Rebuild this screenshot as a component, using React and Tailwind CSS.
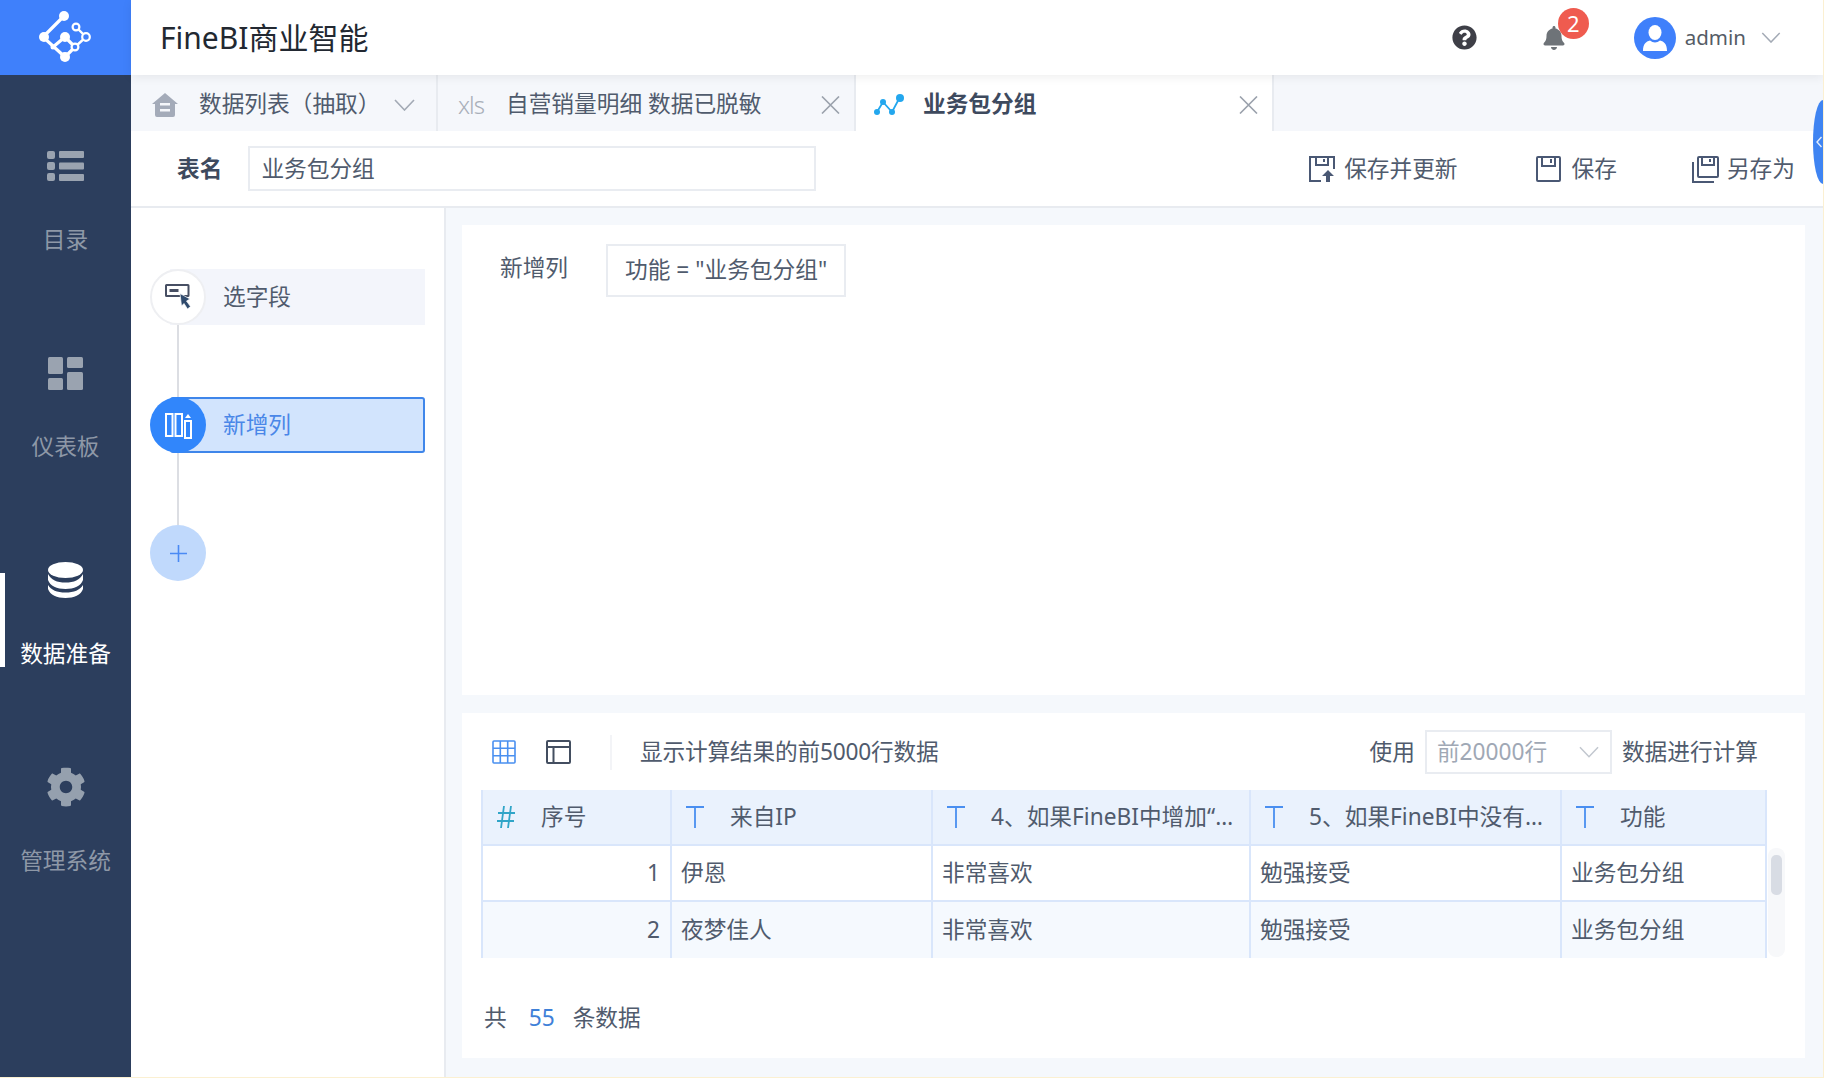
import React from "react";
import { FaCog, FaQuestionCircle, FaBell } from "react-icons/fa";

const Logo = () => (
  <svg width="131" height="75" viewBox="0 0 131 75" fill="none">
    <g stroke="#fff" strokeWidth="3.2" strokeLinecap="round">
      <path d="M64 16 L43 37 L65 57 M53 47 L65 37 L75 47 L65 57" />
      <path d="M76 27 L86 37 L75 47" strokeWidth="2.4" />
    </g>
    <g fill="#fff">
      <circle cx="64" cy="16" r="5" />
      <circle cx="44" cy="37" r="5" />
      <circle cx="65" cy="37" r="5" />
      <circle cx="65" cy="57" r="5" />
      <circle cx="53" cy="47" r="2.5" />
    </g>
    <g fill="#3f80fb" stroke="#fff" strokeWidth="2.2">
      <circle cx="76" cy="27" r="3.4" />
      <circle cx="86" cy="37" r="3.8" />
      <circle cx="75" cy="47" r="3.4" />
    </g>
  </svg>
);

const ListIcon = () => (
  <svg width="38" height="32" viewBox="0 0 38 32" fill="#9aa3b0">
    <rect x="0" y="1" width="8" height="8" rx="2" />
    <rect x="0" y="12" width="8" height="8" rx="2" />
    <rect x="0" y="23" width="8" height="8" rx="2" />
    <rect x="12" y="1" width="25" height="7" rx="1" />
    <rect x="12" y="12.5" width="25" height="7" rx="1" />
    <rect x="12" y="24" width="25" height="7" rx="1" />
  </svg>
);

const DashIcon = () => (
  <svg width="35" height="33" viewBox="0 0 35 33" fill="#9aa3b0">
    <rect x="0" y="0" width="15" height="17" rx="1.5" />
    <rect x="0" y="21" width="15" height="12" rx="1.5" />
    <rect x="19" y="0" width="16" height="11" rx="1.5" />
    <rect x="19" y="15" width="16" height="18" rx="1.5" />
  </svg>
);

const DbIcon = () => (
  <svg width="35" height="36" viewBox="0 0 35 36" fill="#fff">
    <ellipse cx="17.5" cy="8" rx="17.5" ry="8" />
    <path d="M0 12 C3 18 9 20.5 17.5 20.5 C26 20.5 32 18 35 12 V18 C33 24 26 27 17.5 27 C9 27 2 24 0 18 Z" />
    <path d="M0 23 C3 28 9 30.5 17.5 30.5 C26 30.5 32 28 35 23 V27 C33 33 26 36 17.5 36 C9 36 2 33 0 27 Z" />
  </svg>
);

const NavItem = ({ icon, label, active }) => (
  <div className="h-[207px] flex flex-col items-center shrink-0">
    <div className="h-[40px] flex items-center justify-center">{icon}</div>
    <div className={`mt-[38px] leading-[32px] ${active ? "text-white" : "text-[#8e98a7]"}`}>{label}</div>
  </div>
);

const Chevron = ({ w = 21, h = 12, color = "#a3aab5" }) => (
  <svg width={w} height={h} viewBox="0 0 21 12" fill="none" stroke={color} strokeWidth="1.6">
    <path d="M1 1 L10.5 11 L20 1" />
  </svg>
);

const CloseX = () => (
  <svg width="19" height="18" viewBox="0 0 19 18" fill="none" stroke="#9aa1ac" strokeWidth="1.6">
    <path d="M1 0.5 L18 17.5 M18 0.5 L1 17.5" />
  </svg>
);

const HomeIcon = () => (
  <svg width="26" height="24" viewBox="0 0 26 24" fill="#a4abb9">
    <path d="M13 0 L26 11 H23 V22 a2 2 0 0 1 -2 2 H5 a2 2 0 0 1 -2 -2 V11 H0 Z" />
    <rect x="8" y="10" width="10" height="2.5" fill="#f5f7fb" />
    <rect x="8" y="16" width="10" height="2.5" fill="#f5f7fb" />
  </svg>
);

const NodesIcon = () => (
  <svg width="30" height="24" viewBox="0 0 30 24" fill="#23a7ee" stroke="none">
    <path d="M3 19 L9 9 L18 19 L26 4" fill="none" stroke="#23a7ee" strokeWidth="1.8" />
    <circle cx="3" cy="19" r="3" />
    <circle cx="9" cy="9" r="3" />
    <circle cx="18" cy="19" r="3" />
    <circle cx="26" cy="5" r="4" />
  </svg>
);

const SaveUpdateIcon = () => (
  <svg width="26" height="26" viewBox="0 0 26 26" fill="none" stroke="#4a5874" strokeWidth="2">
    <path d="M12 25 H1 V1 H25 V13" />
    <path d="M7 1 V9 H19 V1 M15 3 V6" />
    <path d="M19 14 L25 20 H21 V26 H17 V20 H13 Z" fill="#4a5874" stroke="none" />
  </svg>
);

const SaveIcon = () => (
  <svg width="25" height="26" viewBox="0 0 25 26" fill="none" stroke="#4a5874" strokeWidth="2">
    <rect x="1" y="1" width="23" height="24" rx="1" />
    <path d="M6 1 V10 H19 V1 M15 3 V7" />
  </svg>
);

const SaveAsIcon = () => (
  <svg width="27" height="27" viewBox="0 0 27 27" fill="none" stroke="#4a5874" strokeWidth="2">
    <rect x="6" y="1" width="20" height="20" rx="1" />
    <path d="M10 1 V9 H22 V1 M18 3 V6" />
    <path d="M1 6 V26 H22" />
  </svg>
);

const PickIcon = () => (
  <svg width="26" height="26" viewBox="0 0 26 26" fill="none">
    <rect x="1" y="1" width="22.5" height="11" rx="0.5" stroke="#474f63" strokeWidth="2" />
    <rect x="4.5" y="5" width="9" height="3" fill="#474f63" />
    <path d="M15 9.5 L25 15 L21.5 17 L25.5 22.5 L22.5 25 L19 19.5 L16.5 22 Z" fill="#2f4a6d" stroke="#fff" strokeWidth="0.7" />
  </svg>
);

const ColumnIcon = () => (
  <svg width="27" height="27" viewBox="0 0 27 27" fill="none" stroke="#fff" strokeWidth="2">
    <rect x="1" y="2" width="6.5" height="22" />
    <rect x="10.5" y="2" width="6.5" height="22" />
    <rect x="20" y="9" width="6" height="17" />
    <path d="M20 6 L23 2 L26 6 Z" fill="#fff" stroke="none" />
  </svg>
);

const GridIcon = () => (
  <svg width="24" height="24" viewBox="0 0 24 24" fill="none" stroke="#4a90f0" strokeWidth="1.6">
    <rect x="1" y="1" width="22" height="22" rx="1" />
    <path d="M8.3 1 V23 M15.7 1 V23 M1 8.3 H23 M1 15.7 H23" />
  </svg>
);

const LayoutIcon = () => (
  <svg width="25" height="24" viewBox="0 0 25 24" fill="none" stroke="#434e60" strokeWidth="2">
    <rect x="1" y="1" width="23" height="22" rx="1" />
    <path d="M1 7 H24 M7.5 7 V23" />
  </svg>
);

const TIcon = () => (
  <svg width="18" height="22" viewBox="0 0 18 22" fill="none" stroke="#4a8ff0" strokeWidth="1.8">
    <path d="M0 1 H18 M9 1 V22" />
  </svg>
);

const HashIcon = () => (
  <svg width="18" height="22" viewBox="0 0 18 22" fill="none" stroke="#30a5c8" strokeWidth="1.8">
    <path d="M7 0 L4 22 M14 0 L11 22 M1 7 H18 M0 15 H17" />
  </svg>
);

const HeaderCell = ({ icon, text, last }) => (
  <div className={`h-[56px] flex items-center pl-[14px] border-l-2 border-b-2 border-[#d9e6fb] bg-[#eaf2fd] ${last ? "border-r-2" : ""}`}>
    <span className="shrink-0">{icon}</span>
    <span className="ml-[26px] whitespace-nowrap text-[#505b6d]">{text}</span>
  </div>
);

const Cell = ({ children, right, bg, last, bottom }) => (
  <div className={`h-[56px] flex items-center pl-[9px] pr-[10px] border-l-2 border-[#d9e6fb] ${right ? "justify-end" : ""} ${bottom ? "border-b-2" : ""} ${last ? "border-r-2" : ""} ${bg}`}>
    <span className="whitespace-nowrap text-[#505b6d]">{children}</span>
  </div>
);

const Row = ({ n, name, a, b, bg, bottom }) => (
  <>
    <Cell right bg={bg} bottom={bottom}>{n}</Cell>
    <Cell bg={bg} bottom={bottom}>{name}</Cell>
    <Cell bg={bg} bottom={bottom}>{a}</Cell>
    <Cell bg={bg} bottom={bottom}>{b}</Cell>
    <Cell bg={bg} bottom={bottom} last>业务包分组</Cell>
  </>
);

export default function App() {
  return (
    <div
      className="w-[1824px] h-[1078px] flex relative overflow-hidden text-[22.7px] text-[#505b6d] border-r border-b border-[#fbf0d2]"
      style={{ fontFamily: '"Noto Sans", "Noto Sans CJK SC", sans-serif' }}
    >
      {/* sidebar */}
      <aside className="w-[131px] shrink-0 bg-[#2c3e5d] flex flex-col relative">
        <div className="h-[75px] bg-[#3f80fb] shrink-0"><Logo /></div>
        <nav className="pt-[71px] flex flex-col">
          <NavItem icon={<ListIcon />} label="目录" />
          <NavItem icon={<DashIcon />} label="仪表板" />
          <NavItem icon={<DbIcon />} label="数据准备" active />
          <NavItem icon={<FaCog size={40} color="#95a0ae" />} label="管理系统" />
        </nav>
        <div className="absolute left-0 top-[573px] w-[5px] h-[94px] bg-white" />
      </aside>

      <div className="flex-1 min-w-0 flex flex-col">
        {/* header */}
        <header className="h-[75px] shrink-0 bg-white flex items-center pl-[29px] relative z-10 shadow-[0_2px_10px_rgba(0,0,0,0.07)]">
          <div className="text-[30px] text-[#222831]">FineBI商业智能</div>
          <div className="ml-auto flex items-center pr-[42px]">
            <FaQuestionCircle size={25} color="#3e3f47" />
            <div className="relative ml-[66px] mr-[69px] w-[22px] flex justify-center">
              <FaBell size={24} color="#6e7378" />
              <span className="absolute left-[15px] top-[-18px] w-[31px] h-[31px] rounded-full bg-[#ef5b4f] text-white text-[22px] flex items-center justify-center">2</span>
            </div>
            <div className="w-[42px] h-[42px] rounded-full bg-[#3f80fb] flex items-center justify-center">
              <svg width="24" height="26" viewBox="0 0 24 26" fill="#fff">
                <ellipse cx="12" cy="7.5" rx="6.5" ry="7.5" />
                <path d="M0 26 C0 19 3 16.5 7 15.5 C10 18 14 18 17 15.5 C21 16.5 24 19 24 26 Z" />
              </svg>
            </div>
            <span className="ml-[9px] text-[20.5px] text-[#555c66]">admin</span>
            <span className="ml-[15px]"><Chevron w={20} h={11} /></span>
          </div>
        </header>

        {/* tabs */}
        <div className="h-[56px] shrink-0 flex bg-[#f5f7fb]">
          <div className="w-[307px] flex items-center pl-[21px] pt-[3px] border-r-2 border-[#e8ebf0]">
            <HomeIcon />
            <span className="ml-[21px] whitespace-nowrap">数据列表（抽取）</span>
            <span className="ml-[13px]"><Chevron /></span>
          </div>
          <div className="w-[418px] flex items-center pl-[20px] pt-[3px] border-r-2 border-[#e8ebf0]">
            <span className="w-[27px] text-[#a9afb9] font-light text-[24px] tracking-[-1px]">xls</span>
            <span className="ml-[21px] whitespace-nowrap">自营销量明细 数据已脱敏</span>
            <span className="ml-auto mr-[14px]"><CloseX /></span>
          </div>
          <div className="w-[418px] flex items-center pl-[18px] pt-[3px] bg-white border-r-2 border-[#e8ebf0]">
            <NodesIcon />
            <span className="ml-[19px] font-bold text-[#3e4a5e]">业务包分组</span>
            <span className="ml-auto mr-[14px]"><CloseX /></span>
          </div>
        </div>

        {/* name row */}
        <div className="h-[77px] shrink-0 bg-white flex items-center border-b-2 border-[#e8ebf0] pl-[46px]">
          <span className="pt-[2px] font-bold text-[#3e4a5e]">表名</span>
          <div className="ml-[26px] w-[568px] h-[45px] border-2 border-[#e9ecf1] flex items-center pl-[11px] pt-[1px]">业务包分组</div>
          <div className="ml-auto flex items-center pr-[28px] pt-[2px]">
            <SaveUpdateIcon />
            <span className="ml-[9px]">保存并更新</span>
            <span className="ml-[78px]"><SaveIcon /></span>
            <span className="ml-[11px]">保存</span>
            <span className="ml-[75px]"><SaveAsIcon /></span>
            <span className="ml-[8px]">另存为</span>
          </div>
        </div>

        {/* body */}
        <div className="flex-1 min-h-0 flex">
          <div className="w-[315px] shrink-0 bg-white border-r-2 border-[#e8ebf0] pl-[19px] pt-[61px] relative">
            <div className="flex flex-col">
              <div className="relative h-[56px] w-[275px] flex items-center">
                <div className="absolute left-[20px] right-0 top-0 bottom-0 bg-[#f3f5fb]" />
                <div className="relative w-[56px] h-[56px] rounded-full bg-white border-2 border-[#eeeff2] flex items-center justify-center"><PickIcon /></div>
                <span className="relative ml-[17px]">选字段</span>
              </div>
              <div className="w-[2px] h-[72px] ml-[27px] bg-[#dcdee3]" />
              <div className="relative h-[56px] w-[275px] flex items-center">
                <div className="absolute left-[20px] right-0 top-0 bottom-0 bg-[#d2e4fd] border-2 border-[#3f86ea] rounded-[3px]" />
                <div className="relative w-[56px] h-[56px] rounded-full bg-[#3186fb] flex items-center justify-center"><ColumnIcon /></div>
                <span className="relative ml-[17px] text-[#4a87e8]">新增列</span>
              </div>
              <div className="w-[2px] h-[72px] ml-[27px] bg-[#dcdee3]" />
              <div className="w-[56px] h-[56px] rounded-full bg-[#c0d9fc] flex items-center justify-center">
                <svg width="17" height="17" viewBox="0 0 17 17" stroke="#4a8af4" strokeWidth="1.6"><path d="M8.5 0 V17 M0 8.5 H17" /></svg>
              </div>
            </div>
          </div>

          <div className="flex-1 min-w-0 bg-[#f5f8fc] pl-[16px] pr-[18px] pt-[17px] pb-[19px] flex flex-col gap-[18px]">
            {/* upper card */}
            <div className="h-[470px] shrink-0 bg-white flex items-start pl-[38px] pt-[19px]">
              <span className="mt-[7px]">新增列</span>
              <div className="ml-[38px] h-[53px] px-[17px] border-2 border-[#e9ecf1] flex items-center whitespace-nowrap">功能 = "业务包分组"</div>
            </div>

            {/* lower card */}
            <div className="flex-1 min-h-0 bg-white pl-[19px] pr-[17px] pt-[17px]">
              <div className="h-[44px] flex items-center pl-[11px] pr-[30px]">
                <GridIcon />
                <span className="ml-[30px]"><LayoutIcon /></span>
                <span className="ml-[39px] w-[2px] h-[35px] bg-[#f3f4f7]" />
                <span className="ml-[28px] tracking-[-0.2px]">显示计算结果的前5000行数据</span>
                <span className="ml-auto">使用</span>
                <div className="ml-[10px] w-[187px] h-[44px] border-2 border-[#e9ecf1] flex items-center pl-[10px] pr-[11px] text-[#a0a8b5]">
                  前20000行
                  <span className="ml-auto"><Chevron w={20} h={12} color="#c2c7cf" /></span>
                </div>
                <span className="ml-[10px]">数据进行计算</span>
              </div>

              <div className="mt-[16px] flex items-start">
                <div className="w-[1286px] grid grid-cols-[189px_261px_318px_311px_207px]">
                  <HeaderCell icon={<HashIcon />} text="序号" />
                  <HeaderCell icon={<TIcon />} text="来自IP" />
                  <HeaderCell icon={<TIcon />} text="4、如果FineBI中增加“…" />
                  <HeaderCell icon={<TIcon />} text="5、如果FineBI中没有…" />
                  <HeaderCell icon={<TIcon />} text="功能" last />
                  <Row n="1" name="伊恩" a="非常喜欢" b="勉强接受" bg="bg-white" bottom />
                  <Row n="2" name="夜梦佳人" a="非常喜欢" b="勉强接受" bg="bg-[#f5f9fe]" />
                </div>
                <div className="ml-[1px] mt-[58px] w-[17px] h-[109px] rounded-[8px] bg-[#f7f8fa] px-[3px] pt-[7px]">
                  <div className="w-[11px] h-[40px] rounded-[5px] bg-[#d8dce4]" />
                </div>
              </div>

              <div className="mt-[43px] pl-[3px] h-[34px] flex items-center">
                <span>共</span>
                <span className="ml-[22px] text-[#3f80d8]">55</span>
                <span className="ml-[18px]">条数据</span>
              </div>
            </div>
          </div>
        </div>
      </div>

      {/* collapse handle */}
      <div className="absolute right-0 top-[100px] w-[10px] h-[84px] bg-[#3f84f2] rounded-[100%_0_0_100%/50%_0_0_50%] flex items-center justify-end pr-[1px]">
        <svg width="6" height="12" viewBox="0 0 6 12" fill="none" stroke="#e3edfc" strokeWidth="1.4"><path d="M5.5 1 L1 6 L5.5 11" /></svg>
      </div>
    </div>
  );
}
